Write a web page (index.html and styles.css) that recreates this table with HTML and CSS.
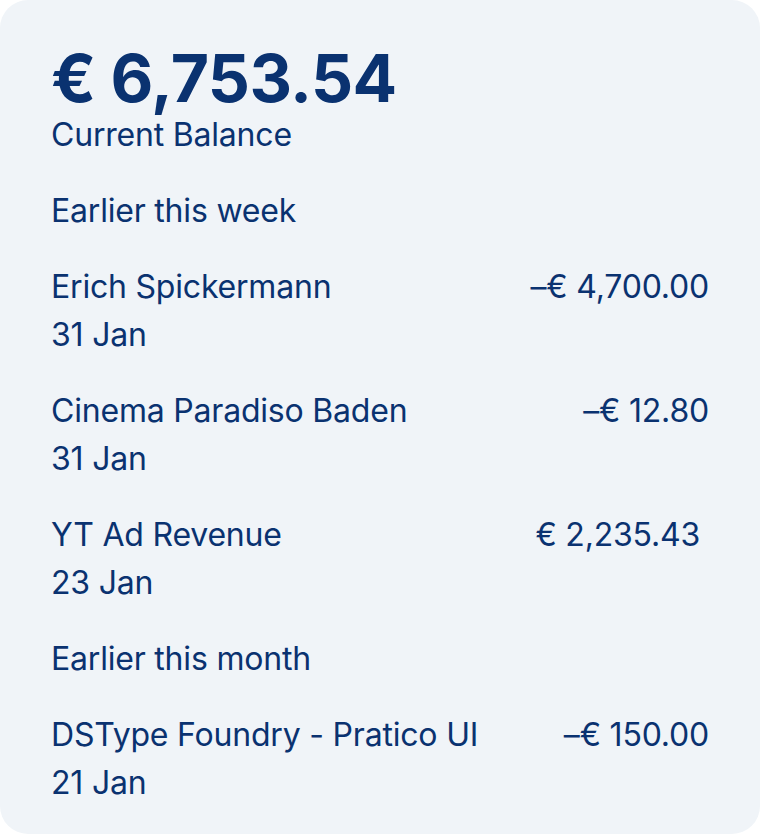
FILE: index.html
```html
<!DOCTYPE html>
<html lang="en">
<head>
<meta charset="utf-8">
<title>Balance</title>
<link rel="stylesheet" href="styles.css">
</head>
<body>
<main class="card">
  <header class="balance">
    <div class="balance-amount">€ 6,753.54</div>
    <div class="balance-label">Current Balance</div>
  </header>
  <section class="group">
    <h2 class="group-title">Earlier this week</h2>
    <div class="tx">
      <div class="tx-name">Erich Spickermann</div>
      <div class="tx-amount">–€ 4,700.00</div>
      <div class="tx-date">31 Jan</div>
    </div>
    <div class="tx">
      <div class="tx-name">Cinema Paradiso Baden</div>
      <div class="tx-amount">–€ 12.80</div>
      <div class="tx-date">31 Jan</div>
    </div>
    <div class="tx">
      <div class="tx-name">YT Ad Revenue</div>
      <div class="tx-amount tx-amount--in">€ 2,235.43</div>
      <div class="tx-date">23 Jan</div>
    </div>
  </section>
  <section class="group">
    <h2 class="group-title">Earlier this month</h2>
    <div class="tx">
      <div class="tx-name">DSType Foundry - Pratico UI</div>
      <div class="tx-amount">–€ 150.00</div>
      <div class="tx-date">21 Jan</div>
    </div>
  </section>
</main>
</body>
</html>
```
FILE: styles.css
```css
html, body {
  margin: 0;
  padding: 0;
  background: #ffffff;
}
body {
  font-family: "Inter", "Liberation Sans", sans-serif;
  color: #0a3270;
}
.card {
  box-sizing: border-box;
  width: 760px;
  height: 834px;
  background: #f0f4f8;
  border-radius: 28px;
  padding: 45px 51px 0 51px;
  display: flex;
  flex-direction: column;
  gap: 28px;
}
.balance-amount {
  font-size: 66px;
  line-height: 66px;
  font-weight: 700;
  letter-spacing: -0.6px;
}
.balance-label,
.group-title,
.tx-name,
.tx-amount,
.tx-date {
  font-size: 32px;
  line-height: 48px;
  font-weight: 400;
  letter-spacing: -0.2px;
}
.group {
  display: flex;
  flex-direction: column;
  gap: 28px;
}
.group-title {
  margin: 0;
}
.tx {
  display: grid;
  grid-template-columns: 1fr auto;
}
.tx-amount {
  text-align: right;
}
.tx-amount--in {
  padding-right: 9px;
}
.tx-date {
  grid-column: 1 / -1;
}
```
